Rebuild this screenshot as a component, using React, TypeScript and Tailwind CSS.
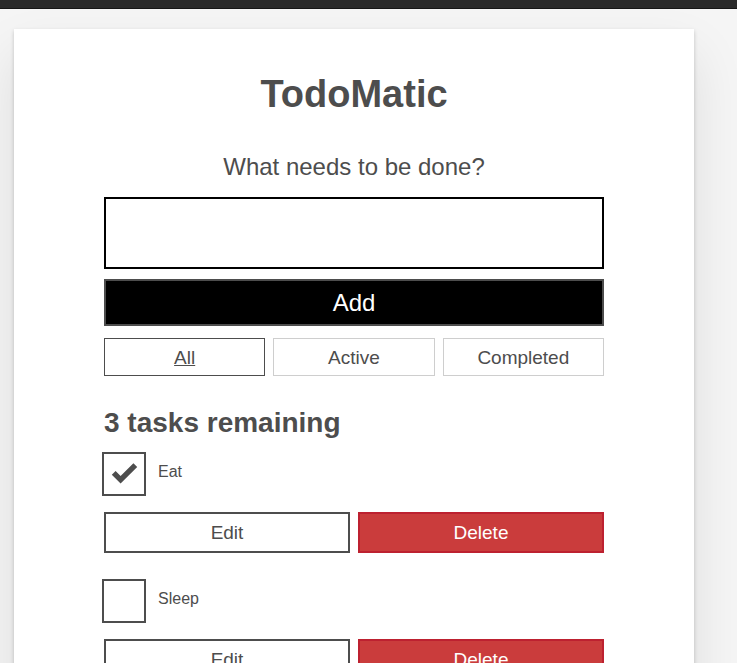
import { useState } from "react";

type Task = { id: string; name: string; completed: boolean };

const initialTasks: Task[] = [
  { id: "todo-0", name: "Eat", completed: true },
  { id: "todo-1", name: "Sleep", completed: false },
];

const filters = ["All", "Active", "Completed"];

function FilterButton({ name, pressed, onPress }: { name: string; pressed: boolean; onPress: () => void }) {
  return (
    <button
      type="button"
      aria-pressed={pressed}
      onClick={onPress}
      className={
        pressed
          ? "h-[38px] border border-[#4d4d4d] pt-0.5 text-[19px] leading-6 underline"
          : "h-[38px] border border-[#cecece] pt-0.5 text-[19px] leading-6"
      }
    >
      {name}
    </button>
  );
}

function TodoItem({ task, onToggle }: { task: Task; onToggle: () => void }) {
  return (
    <li className="flex flex-col gap-4">
      <div className="-ml-0.5 flex items-start gap-3">
        <div className="relative size-11">
          <input
            id={task.id}
            type="checkbox"
            checked={task.completed}
            onChange={onToggle}
            className="peer block size-11 appearance-none border-2 border-[#4d4d4d] bg-white"
          />
          <svg
            viewBox="0 0 44 44"
            aria-hidden="true"
            className="pointer-events-none absolute inset-0 hidden size-11 peer-checked:block"
          >
            <path d="M9.8 22.8 13.6 19 18.6 24 31.4 11.2 35.2 15 18.6 31.6Z" fill="#4d4d4d" />
          </svg>
        </div>
        <label htmlFor={task.id} className="py-2 text-base leading-6">
          {task.name}
        </label>
      </div>
      <div className="grid grid-cols-2 gap-2">
        <button type="button" className="h-[41px] border-2 border-[#4d4d4d] pt-px text-[19px] leading-6">
          Edit
        </button>
        <button
          type="button"
          className="h-[41px] border-2 border-[#bd2130] bg-[#ca3c3c] pt-px text-[19px] leading-6 text-white"
        >
          Delete
        </button>
      </div>
    </li>
  );
}

export default function App() {
  const [tasks, setTasks] = useState(initialTasks);
  const [filter, setFilter] = useState("All");
  const [name, setName] = useState("");

  const toggle = (id: string) =>
    setTasks(tasks.map((t) => (t.id === id ? { ...t, completed: !t.completed } : t)));

  return (
    <div className="flex h-screen flex-col overflow-hidden bg-[#f5f5f5] font-['Liberation_Sans',Arial,sans-serif] text-[#4d4d4d]">
      <div className="h-[9px] shrink-0 border-b border-[#161616] bg-[#2a2a2a]" />
      <div className="min-h-0 grow overflow-hidden pt-5 pr-[43px] pl-[14px]">
        <main className="max-w-[680px] bg-white px-[90px] pt-10 pb-24 shadow-[0_2px_4px_0_rgba(0,0,0,0.2),0_25px_50px_0_rgba(0,0,0,0.1)]">
          <h1 className="text-center text-[38px] leading-[50px] font-bold">TodoMatic</h1>
          <form className="mt-[30px] flex flex-col" onSubmit={(e) => e.preventDefault()}>
            <label htmlFor="new-todo-input" className="text-center text-2xl leading-9">
              What needs to be done?
            </label>
            <input
              id="new-todo-input"
              type="text"
              autoComplete="off"
              value={name}
              onChange={(e) => setName(e.target.value)}
              className="mt-3 h-[72px] w-full border-2 border-black bg-white px-4 text-2xl"
            />
            <button
              type="submit"
              className="mt-2.5 h-[47px] w-full border-2 border-[#4d4d4d] bg-black text-2xl text-white"
            >
              Add
            </button>
          </form>
          <div className="mt-3 grid grid-cols-3 gap-2">
            {filters.map((f) => (
              <FilterButton key={f} name={f} pressed={f === filter} onPress={() => setFilter(f)} />
            ))}
          </div>
          <h2 id="list-heading" className="mt-7 text-[28px] leading-[38px] font-bold">
            3 tasks remaining
          </h2>
          <ul aria-labelledby="list-heading" className="mt-2.5 flex flex-col gap-[26px]">
            {tasks.map((t) => (
              <TodoItem key={t.id} task={t} onToggle={() => toggle(t.id)} />
            ))}
          </ul>
        </main>
      </div>
    </div>
  );
}
